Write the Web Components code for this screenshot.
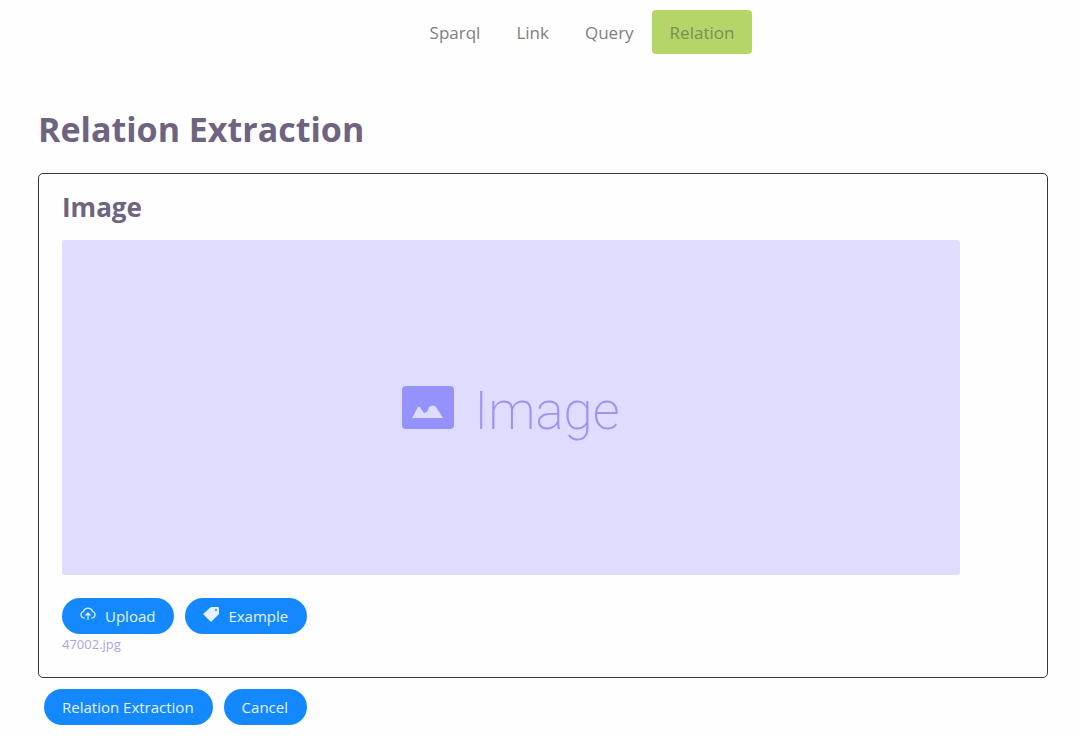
<!DOCTYPE html>
<html lang="en">
<head>
<meta charset="utf-8">
<title>Relation Extraction</title>
<style>
body { margin: 0; background: #fefefe; color: #6f6480; font-family: "Open Sans", "Noto Sans", sans-serif; font-size: 16px; }
</style>
</head>
<body>
<relation-page></relation-page>
<script>
const define = (name, html) => customElements.define(name, class extends HTMLElement {
  constructor() {
    super();
    this.attachShadow({ mode: "open" }).innerHTML = html;
  }
});

define("nav-link", `
<style>
:host { display: block; }
a { display: block; padding: 1px 18px 0; line-height: 43px; border-radius: 4px; color: #7f7f7f; text-decoration: none; font-size: 17px; }
:host([active]) a { background: #b5d568; color: #7c8d57; }
</style>
<a href="#"><slot></slot></a>`);

define("top-nav", `
<style>
:host { display: block; }
nav { display: flex; justify-content: center; padding: 10px 0 0 84px; }
</style>
<nav aria-label="Main"><slot></slot></nav>`);

define("pill-button", `
<style>
:host { display: block; }
button { display: flex; align-items: center; height: 36px; padding: 0 19px 0 18px; border: 0; border-radius: 18px; background: #1488ff; color: #e4f3ff; font: inherit; font-size: 15px; cursor: pointer; }
::slotted(svg) { width: 16px; height: 16px; margin: 0 9px 4px 0; }
</style>
<button type="button"><slot name="icon"></slot><slot></slot></button>`);

define("button-row", `
<style>:host { display: flex; gap: 11px; }</style>
<slot></slot>`);

define("image-placeholder", `
<style>
:host { display: flex; align-items: center; justify-content: center; gap: 20px; height: 335px; border-radius: 3px; background: #dedcff; color: #9592ff; }
svg { width: 52px; height: 43px; }
span { padding-top: 6px; color: #9a94f2; font: 200 53px/64px "Roboto", "Open Sans", sans-serif; }
</style>
<svg viewBox="0 0 52 43" aria-hidden="true"><rect width="52" height="43" rx="4" fill="currentColor"/><path d="M10 32 16 21q2-1 3 2l3 4 3-1 2-5q4-3 7 0l7 11z" fill="#dedcff"/></svg>
<span><slot></slot></span>`);

define("image-panel", `
<style>
:host { display: block; border: 1px solid #38363c; border-radius: 5px; padding: 15px 23px 23px; }
h2 { margin: 0 0 15px; font-size: 26px; line-height: 36px; font-weight: 700; }
.picture { padding-right: 64px; margin-bottom: 23px; }
.file { font-size: 13px; line-height: 20px; color: #aaa6e0; }
</style>
<h2><slot name="title"></slot></h2>
<div class="picture"><slot name="picture"></slot></div>
<slot name="actions"></slot>
<div class="file"><slot name="file"></slot></div>`);

define("relation-page", `
<style>
:host { display: block; }
main { padding: 50px 32px 12px 38px; }
h1 { margin: 0 0 19px; font-size: 34px; line-height: 50px; font-weight: 700; }
.actions { margin: 11px 0 0 6px; }
</style>
<top-nav>
<nav-link>Sparql</nav-link><nav-link>Link</nav-link><nav-link>Query</nav-link><nav-link active>Relation</nav-link>
</top-nav>
<main>
<h1>Relation Extraction</h1>
<image-panel>
<span slot="title">Image</span>
<image-placeholder slot="picture">Image</image-placeholder>
<button-row slot="actions">
<pill-button><svg slot="icon" viewBox="0 0 16 16" fill="none" stroke="currentColor" stroke-width="1.2" aria-hidden="true"><path d="M5 12H4a3.300 3.300 0 0 1-.5-6.500 4.700 4.700 0 0 1 9 0A3.300 3.300 0 0 1 12 12h-1M8 14V7M5.500 9.500 8 7l2.500 2.500"/></svg>Upload</pill-button>
<pill-button><svg slot="icon" viewBox="0 0 16 16" fill="currentColor" aria-hidden="true"><path fill-rule="evenodd" d="m0 8 8-7h7l1 1v6l-8 8zM13 3a1 1 0 1 0 0 2 1 1 0 0 0 0-2z"/></svg>Example</pill-button>
</button-row>
<span slot="file">47002.jpg</span>
</image-panel>
<button-row class="actions">
<pill-button>Relation Extraction</pill-button>
<pill-button>Cancel</pill-button>
</button-row>
</main>`);
</script>
</body>
</html>
